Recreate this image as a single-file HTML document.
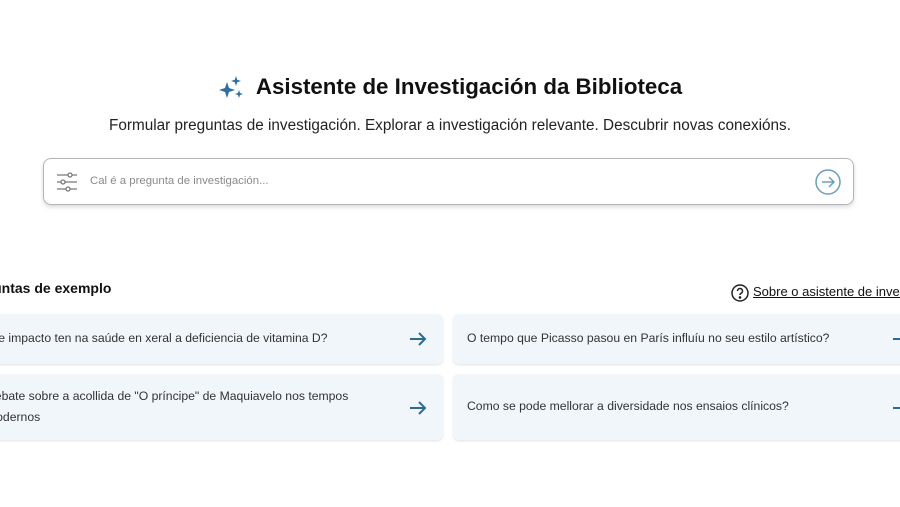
<!DOCTYPE html>
<html><head><meta charset="utf-8"><style>
*{margin:0;padding:0;box-sizing:border-box}
body{width:900px;height:507px;overflow:hidden;background:#fff;font-family:"Liberation Sans",sans-serif;color:#1a1a1a;position:relative}
.abs{position:absolute;white-space:nowrap}
h1{position:absolute;left:0;right:0;top:74px;text-align:center;font-size:22.3px;font-weight:bold;color:#111}
.sub{position:absolute;left:0;right:0;top:117px;text-align:center;font-size:15.3px;color:#222}
.search{position:absolute;left:43px;top:158px;width:811px;height:47px;border:1px solid #b5b5b5;border-radius:8px;box-shadow:0 2px 4px rgba(0,0,0,.15)}
.card{position:absolute;background:#f1f6fb;border-radius:6px;box-shadow:0 1px 2px rgba(0,0,0,.12);font-size:12.2px;color:#333;overflow:hidden}
.card span{position:absolute;white-space:nowrap;line-height:21px}
</style></head><body>
<h1><svg width="26" height="26" viewBox="0 0 26 26" style="vertical-align:-6px;margin-right:12px"><path fill="#2d6ea3" d="M9 8 L11 14 L17 16 L11 18 L9 24 L7 18 L1 16 L7 14Z M18 2 L19.2 5.8 L23 7 L19.2 8.2 L18 12 L16.8 8.2 L13 7 L16.8 5.8Z M21 16 L22 19 L25 20 L22 21 L21 24 L20 21 L17 20 L20 19Z"/></svg>Asistente de Investigación da Biblioteca</h1>
<div class="sub">Formular preguntas de investigación. Explorar a investigación relevante. Descubrir novas conexións.</div>
<div class="search">
<svg class="abs" style="left:12px;top:12px" width="22" height="22" viewBox="0 0 22 22" fill="none" stroke="#777" stroke-width="1.3"><path d="M1 4h20M1 11h20M1 18h20"/><circle cx="14" cy="4" r="2" fill="#fff"/><circle cx="7" cy="11" r="2" fill="#fff"/><circle cx="12" cy="18" r="2" fill="#fff"/></svg>
<div class="abs" style="left:46px;top:16px;font-size:11.4px;color:#8a8a8a">Cal é a pregunta de investigación...</div>
<svg class="abs" style="left:771px;top:10px" width="26" height="26" viewBox="0 0 26 26" fill="none" stroke="#6a9fc2" stroke-width="1.5"><circle cx="13" cy="13" r="12"/><path d="M7 13h12M14 8l5 5-5 5"/></svg>
</div>
<div class="abs" style="left:-38px;top:280px;font-size:14px;font-weight:bold;color:#111">Preguntas de exemplo</div>
<svg class="abs" style="left:731px;top:284px" width="18" height="18" viewBox="0 0 18 18" fill="none" stroke="#222" stroke-width="1.5"><circle cx="9" cy="9" r="8"/><path d="M6.5 7a2.5 2.5 0 1 1 3.5 2.3c-.8.4-1 .9-1 1.7"/><circle cx="9" cy="13.5" r=".6" fill="#222"/></svg>
<div class="abs" style="left:753px;top:284px;font-size:13px;color:#111;text-decoration:underline">Sobre o asistente de investigación</div>
<div class="card" style="left:-10px;top:314px;width:453px;height:50px"><span style="left:-8px;top:14px">Que impacto ten na saúde en xeral a deficiencia de vitamina D?</span></div>
<div class="card" style="left:-10px;top:374px;width:453px;height:66px"><span style="left:-4px;top:12px">Debate sobre a acollida de "O príncipe" de Maquiavelo nos tempos<br>modernos</span></div>
<div class="card" style="left:453px;top:314px;width:460px;height:50px"><span style="left:14px;top:14px">O tempo que Picasso pasou en París influíu no seu estilo artístico?</span></div>
<div class="card" style="left:453px;top:374px;width:460px;height:66px"><span style="left:14px;top:22px">Como se pode mellorar a diversidade nos ensaios clínicos?</span></div>
<svg class="abs" style="left:409px;top:330px" width="18" height="18" viewBox="0 0 18 18" fill="none" stroke="#2b6b96" stroke-width="2"><path d="M1 9h15M10 3l6 6-6 6"/></svg>
<svg class="abs" style="left:409px;top:399px" width="18" height="18" viewBox="0 0 18 18" fill="none" stroke="#2b6b96" stroke-width="2"><path d="M1 9h15M10 3l6 6-6 6"/></svg>
<svg class="abs" style="left:892px;top:330px" width="8" height="18" viewBox="0 0 8 18" fill="none" stroke="#2b6b96" stroke-width="2"><path d="M1 9h15"/></svg>
<svg class="abs" style="left:892px;top:399px" width="8" height="18" viewBox="0 0 8 18" fill="none" stroke="#2b6b96" stroke-width="2"><path d="M1 9h15"/></svg>
</body></html>
